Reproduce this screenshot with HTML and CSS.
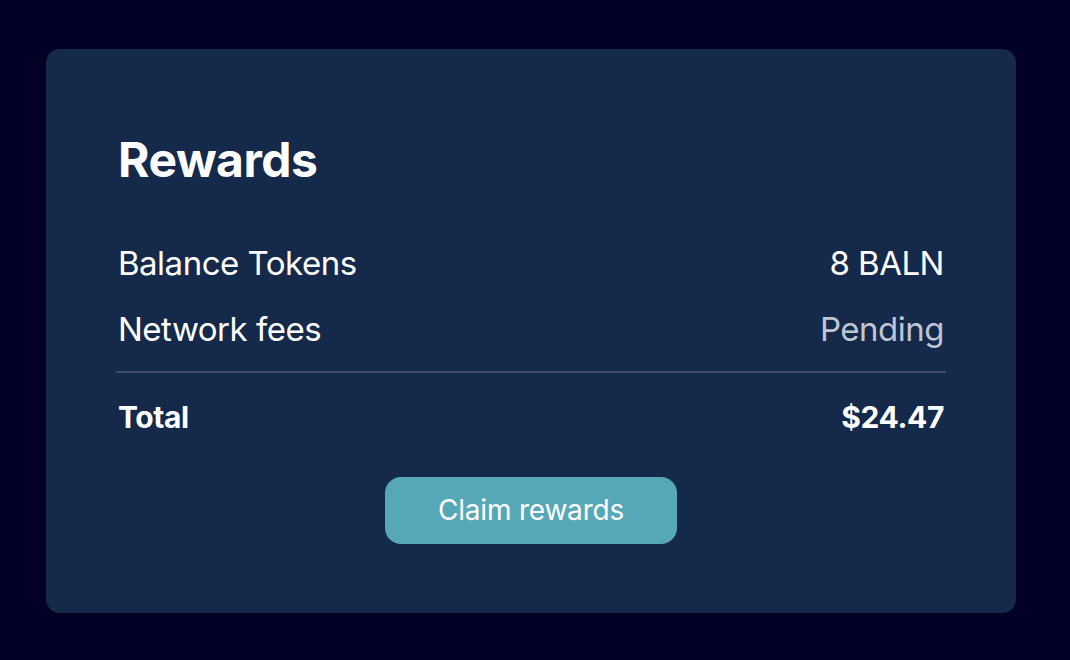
FILE: index.html
```html
<!DOCTYPE html>
<html lang="en">
<head>
<meta charset="utf-8">
<title>Rewards</title>
<link rel="stylesheet" href="styles.css">
</head>
<body>
<div class="page">
  <section class="card">
    <h2 class="title">Rewards</h2>
    <div class="rows">
      <div class="row"><span>Balance Tokens</span><span>8 BALN</span></div>
      <div class="row"><span>Network fees</span><span class="muted">Pending</span></div>
    </div>
    <div class="divider"></div>
    <div class="row total"><span>Total</span><span>$24.47</span></div>
    <div class="actions">
      <button class="claim">Claim rewards</button>
    </div>
  </section>
</div>
</body>
</html>
```
FILE: styles.css
```css
html, body {
  margin: 0;
  padding: 0;
  background: #020027;
}
body {
  font-family: Inter, "Noto Sans", sans-serif;
  color: #ffffff;
}
.page {
  padding: 49px 54px 47px 46px;
}
.card {
  background: #15294a;
  border-radius: 14px;
  padding: 81px 70px 69px 70px;
}
.title {
  margin: 0;
  font-size: 48px;
  line-height: 60px;
  font-weight: 700;
  padding-left: 2px;
  letter-spacing: -0.5px;
}
.rows {
  margin-top: 40px;
}
.row {
  display: flex;
  justify-content: space-between;
  font-size: 33px;
  line-height: 66px;
  padding: 0 2px;
  letter-spacing: -0.5px;
}
.muted {
  color: #bfc6d3;
}
.divider {
  margin-top: 9px;
  height: 2px;
  background: #3c4d6b;
}
.total {
  margin-top: 22px;
  font-size: 30px;
  line-height: 44px;
  font-weight: 700;
  letter-spacing: -0.4px;
}
.actions {
  display: flex;
  justify-content: center;
  margin-top: 38px;
}
.claim {
  width: 292px;
  height: 67px;
  border: none;
  border-radius: 16px;
  background: #56a8b6;
  color: #ffffff;
  font-family: Inter, "Noto Sans", sans-serif;
  font-size: 28px;
  line-height: 67px;
  padding: 0;
  letter-spacing: -0.2px;
}
```
